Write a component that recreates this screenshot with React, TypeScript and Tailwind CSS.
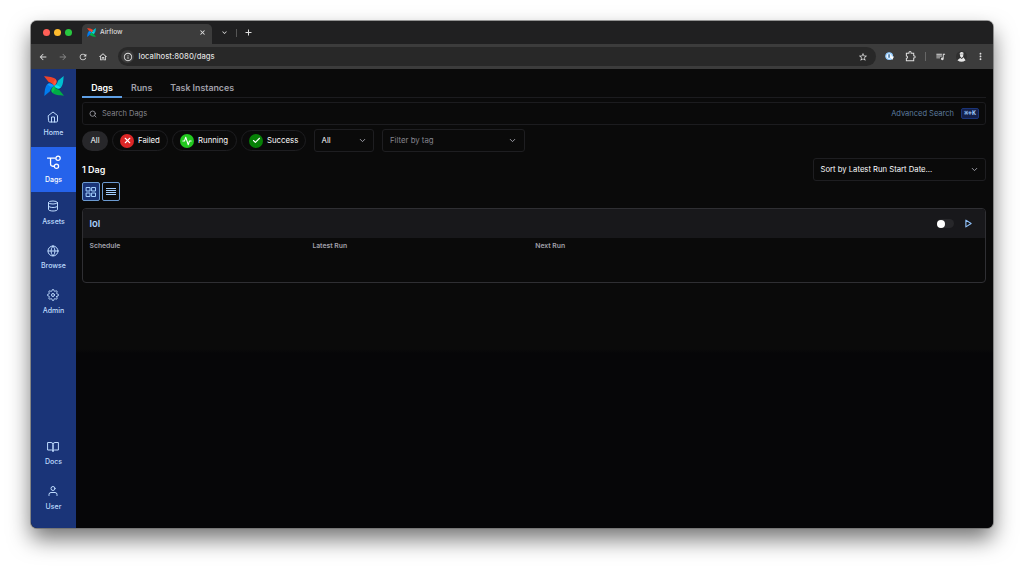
import React from 'react';
import {
  FiActivity,
  FiBookOpen,
  FiCheck,
  FiChevronDown,
  FiDatabase,
  FiGlobe,
  FiGrid,
  FiHome,
  FiPlay,
  FiSearch,
  FiSettings,
  FiUser,
  FiX,
} from 'react-icons/fi';
import {
  MdArrowBack,
  MdArrowForward,
  MdExpandMore,
  MdMoreVert,
  MdOutlineHome,
  MdOutlineInfo,
  MdQueueMusic,
  MdRefresh,
  MdStarBorder,
} from 'react-icons/md';

const BLADES = [
  { angle: 0, color: '#ed432b', light: '#f9583f' },
  { angle: 90, color: '#00bfd0', light: '#11e1ee' },
  { angle: 180, color: '#00ad46', light: '#04c852' },
  { angle: 270, color: '#017cee', light: '#0c9cff' },
];

const AirflowLogo: React.FC<{ className?: string }> = ({ className }) => (
  <svg viewBox="0 0 60 60" className={className} aria-hidden="true">
    {BLADES.map(blade => (
      <g key={blade.angle} transform={`rotate(${blade.angle} 30 30)`}>
        <path d="M30 30C26 24 22 20 14 18L0 1C12 2 30 2 37 12c3 6 0 13-7 18Z" fill={blade.color} />
        <path d="M30 30c-3-6-3-10 0-14l5-6c5 7 1 15-5 20Z" fill={blade.light} />
      </g>
    ))}
  </svg>
);

const DagIcon: React.FC<{ className?: string }> = ({ className }) => (
  <svg viewBox="0 0 28 28" fill="none" stroke="currentColor" strokeWidth="2.400" className={className} aria-hidden="true">
    <path d="M2 6h16M8.500 6v11q0 4 4 4h4" />
    <circle cx="22.500" cy="6" r="4" />
    <circle cx="19.500" cy="21" r="4" />
  </svg>
);

interface NavItemProps {
  label: string;
  icon: React.ReactNode;
  active?: boolean;
}

const NavItem: React.FC<NavItemProps> = ({ label, icon, active }) => (
  <a
    className={`flex h-[44.5px] w-full shrink-0 flex-col items-center justify-center text-[7px] leading-[10px] font-medium ${
      active ? 'gap-[5px] bg-[#2563eb] pt-px text-white' : 'gap-[3px] pb-[2px] text-[#bfdbfe]'
    }`}
  >
    <span className="mr-px flex h-[15px] items-center">{icon}</span>
    {label}
  </a>
);

interface StateFilterProps {
  label: string;
  color: string;
  icon: React.ReactNode;
  className?: string;
}

const StateFilter: React.FC<StateFilterProps> = ({ label, color, icon, className }) => (
  <button
    type="button"
    className={`flex h-[21px] shrink-0 items-center gap-[4px] rounded-full border border-[#1e1e21] pl-[7px] text-[7.800px] text-[#fafafa] ${className}`}
  >
    <span className={`flex h-[14px] w-[14px] items-center justify-center rounded-full text-white ${color}`}>{icon}</span>
    {label}
  </button>
);

const BrowserBar: React.FC = () => (
  <header className="shrink-0 text-[#dedede]">
    <div className="flex h-[23px] items-end bg-[#202021] pl-[11.500px]">
      <div className="flex h-full items-center gap-[4px]">
        <span className="h-[7px] w-[7px] rounded-full bg-[#ff5f57]" />
        <span className="h-[7px] w-[7px] rounded-full bg-[#febc2e]" />
        <span className="h-[7px] w-[7px] rounded-full bg-[#28c840]" />
      </div>
      <div className="ml-[10px] flex h-[20px] w-[130px] items-center rounded-t-[5px] bg-[#3c3c3c] pb-[3px] pl-[5px] pr-[6px] text-[6.600px] font-medium">
        <AirflowLogo className="h-[9px] w-[9px]" />
        <span className="ml-[4.500px]">Airflow</span>
        <FiX className="ml-auto h-[7px] w-[7px]" strokeWidth={3.5} />
      </div>
      <div className="flex h-full items-center">
        <MdExpandMore className="ml-[8px] h-[9px] w-[9px]" />
        <span className="ml-[7px] h-[8px] w-px bg-[#555]" />
        <svg viewBox="0 0 7 7" className="ml-[8px] h-[7px] w-[7px]" stroke="currentColor" strokeWidth="1">
          <path d="M3.500 0.500v6M0.500 3.500h6" />
        </svg>
      </div>
    </div>
    <div className="flex h-[25px] items-center bg-[#3c3c3c] pl-[7px] pr-[7px]">
      <div className="flex items-center gap-[10px]">
        <MdArrowBack className="h-[10px] w-[10px]" />
        <MdArrowForward className="h-[10px] w-[10px] text-[#848484]" />
        <MdRefresh className="h-[10px] w-[10px]" />
        <MdOutlineHome className="h-[10px] w-[10px]" />
      </div>
      <div className="ml-[10px] flex h-[19px] w-[758px] items-center rounded-full bg-[#282828] pl-[3px] pr-[8px] text-[7.700px] font-medium">
        <span className="flex h-[13px] w-[13px] items-center justify-center rounded-full bg-[#3c3c3c]">
          <MdOutlineInfo className="h-[10px] w-[10px]" />
        </span>
        <span className="ml-[4.500px]">localhost:8080/dags</span>
        <MdStarBorder className="ml-auto h-[10px] w-[10px]" />
      </div>
      <div className="ml-auto flex items-center">
        <svg viewBox="0 0 10 10" className="h-[9px] w-[9px]">
          <circle cx="4.600" cy="4.600" r="3.700" fill="#e8f4ff" stroke="#8fcaff" strokeWidth="1.300" />
          <path d="M4.500 2.500v4" stroke="#20578b" strokeWidth="1.400" />
          <path d="M5.500 5H10L8 9Z" fill="#fff" />
        </svg>
        <svg viewBox="0 0 12 12" className="ml-[11px] h-[11px] w-[11px]" fill="none" stroke="currentColor" strokeWidth="1.100">
          <path d="M1.500 2.500H4.300V1.800a1.200 1.200 0 0 1 2.400 0v.7H9.500V5.300h.4a1.200 1.200 0 0 1 0 2.400h-.4v3h-8V8a1.300 1.300 0 0 0 0-2.600Z" />
        </svg>
        <span className="ml-[9px] h-[9px] w-px bg-[#666]" />
        <MdQueueMusic className="ml-[9px] h-[11px] w-[11px]" />
        <svg viewBox="0 0 12 12" className="ml-[10px] h-[11px] w-[11px]">
          <circle cx="6" cy="6" r="6" fill="#303030" />
          <path d="M4 2.500Q6 0 8.200 2l-.4 4L6 7.500 4.600 6ZM1.500 10l3-2.500 2 1.300 1.500-2 2.500 3.200Q6 13.300 1.500 10Z" fill="#e8e8e8" />
          <path d="M4.600 3.500h3" stroke="#999" strokeWidth=".8" />
        </svg>
        <MdMoreVert className="ml-[8px] h-[11px] w-[11px]" />
      </div>
    </div>
  </header>
);

const Sidebar: React.FC = () => (
  <nav className="flex w-[45px] shrink-0 flex-col items-center bg-[#1a3478] pb-[7px]">
    <AirflowLogo className="mt-[7px] h-[20px] w-[20px] shrink-0" />
    <div className="mt-[6.500px] flex w-full flex-col">
      <NavItem label="Home" icon={<FiHome size={12} />} />
      <NavItem label="Dags" icon={<DagIcon className="h-[15px] w-[15px]" />} active />
      <NavItem label="Assets" icon={<FiDatabase size={12} />} />
      <NavItem label="Browse" icon={<FiGlobe size={12} />} />
      <NavItem label="Admin" icon={<FiSettings size={12} />} />
    </div>
    <div className="mt-auto flex w-full flex-col">
      <NavItem label="Docs" icon={<FiBookOpen size={12} />} />
      <NavItem label="User" icon={<FiUser size={12} />} />
    </div>
  </nav>
);

const DagCard: React.FC = () => (
  <article className="mt-[7px] h-[75px] overflow-hidden rounded-[4px] border border-[#2f2f33]">
    <div className="flex h-[29px] items-center bg-[#18181b] pl-[6.500px] pr-[12px]">
      <span className="pt-px text-[9.500px] font-semibold text-[#a9d2ff]">lol</span>
      <span className="ml-auto flex h-[9px] w-[17px] items-center rounded-full bg-[#27272a]">
        <span className="h-[8px] w-[8px] rounded-full bg-white" />
      </span>
      <FiPlay size={9} strokeWidth={3} className="ml-[10px] text-[#90c2fa]" />
    </div>
    <div className="grid grid-cols-4 pl-[6.500px] pr-[4px] pt-[3px] text-[6.800px] leading-[10px] font-semibold text-[#a1a1aa]">
      <span>Schedule</span>
      <span>Latest Run</span>
      <span>Next Run</span>
    </div>
  </article>
);

export default function App() {
  return (
    <div className="h-[569px] w-[1024px] overflow-hidden bg-white pl-[31px] pt-[21px] font-['Inter',sans-serif]">
      <div className="flex h-[507px] w-[962px] flex-col overflow-hidden rounded-[6px] bg-[#09090b] shadow-[0_0_0_1px_rgba(110,110,110,0.7),0_11px_22px_rgba(0,0,0,0.55)]">
        <BrowserBar />
        <div className="flex min-h-0 flex-1">
          <Sidebar />
          <main className="min-w-0 flex-1 bg-linear-to-b from-[#0a0a0a] from-61% to-[#060608] to-62% pl-[6px] pr-[7px] pt-[7px]">
            <div className="flex h-[22px] border-b border-[#1c1c1f] text-[8.800px] font-semibold text-[#a1a1aa]">
              <span className="flex h-[22px] w-[40px] items-center justify-center border-b-2 border-[#5f9fe4] pt-[3px] text-white">Dags</span>
              <span className="ml-[9px] flex h-[22px] items-center pt-px">Runs</span>
              <span className="ml-[18px] flex h-[22px] items-center pt-px">Task Instances</span>
            </div>
            <div className="mt-[4px] flex h-[23px] items-center rounded-[3px] border border-[#1c1c1f] pl-[6px] pr-[6px] text-[7.500px]">
              <FiSearch size={8} strokeWidth={2.5} className="text-[#a1a1aa]" />
              <span className="ml-[5px] pt-px text-[#85858d]">Search Dags</span>
              <span className="ml-auto pt-px text-[#5d7c9f]">Advanced Search</span>
              <kbd className="ml-[7px] flex h-[11px] w-[18px] items-center justify-center rounded-[2px] border border-[#1a3478] bg-[#14204a] font-['DejaVu_Sans_Mono',monospace] text-[6.500px] font-bold text-[#a3cfff]">
                ⌘+K
              </kbd>
            </div>
            <div className="mt-[4px] flex h-[23px] items-center text-[7.800px] text-[#fafafa]">
              <button type="button" className="h-[20px] w-[26px] rounded-full bg-[#27272a]">All</button>
              <StateFilter label="Failed" color="bg-[#dc2626]" icon={<FiX size={9} strokeWidth={3} />} className="ml-[4px] w-[56px]" />
              <StateFilter label="Running" color="bg-[#22c91f]" icon={<FiActivity size={10} strokeWidth={2.5} />} className="ml-[4px] w-[65px]" />
              <StateFilter label="Success" color="bg-[#078007]" icon={<FiCheck size={9} strokeWidth={3} />} className="ml-[4px] w-[65px]" />
              <div className="ml-[8px] flex h-[23px] w-[60px] items-center justify-between rounded-[3px] border border-[#1e1e21] px-[6.500px]">
                All
                <FiChevronDown size={9} strokeWidth={2.5} className="text-[#a1a1aa]" />
              </div>
              <div className="ml-[8px] flex h-[23px] w-[143px] items-center justify-between rounded-[3px] border border-[#1e1e21] px-[7px] text-[#85858d]">
                Filter by tag
                <FiChevronDown size={9} strokeWidth={2.5} className="text-[#a1a1aa]" />
              </div>
            </div>
            <div className="mt-[6px] flex h-[23px] items-center justify-between">
              <h2 className="text-[9px] font-semibold text-[#fafafa]">1 Dag</h2>
              <div className="flex h-[23px] w-[173px] items-center justify-between rounded-[3px] border border-[#1e1e21] px-[6.500px] text-[7.700px] text-[#fafafa]">
                Sort by Latest Run Start Date...
                <FiChevronDown size={9} strokeWidth={2.5} className="text-[#a1a1aa]" />
              </div>
            </div>
            <div className="mt-px flex gap-[2px]">
              <button type="button" className="flex h-[19px] w-[18px] items-center justify-center rounded-[2px] border border-[#6c9ad0] bg-[#1a3478] text-[#a3cfff]">
                <FiGrid size={12} />
              </button>
              <button type="button" className="flex h-[19px] w-[18px] items-center justify-center rounded-[2px] border border-[#6c9ad0] text-[#a3cfff]">
                <svg viewBox="0 0 10 7" className="h-[7px] w-[10px]" stroke="currentColor" strokeWidth="1">
                  <path d="M0 0.500h10M0 2.500h10M0 4.500h10M0 6.500h10" />
                </svg>
              </button>
            </div>
            <DagCard />
          </main>
        </div>
      </div>
    </div>
  );
}
